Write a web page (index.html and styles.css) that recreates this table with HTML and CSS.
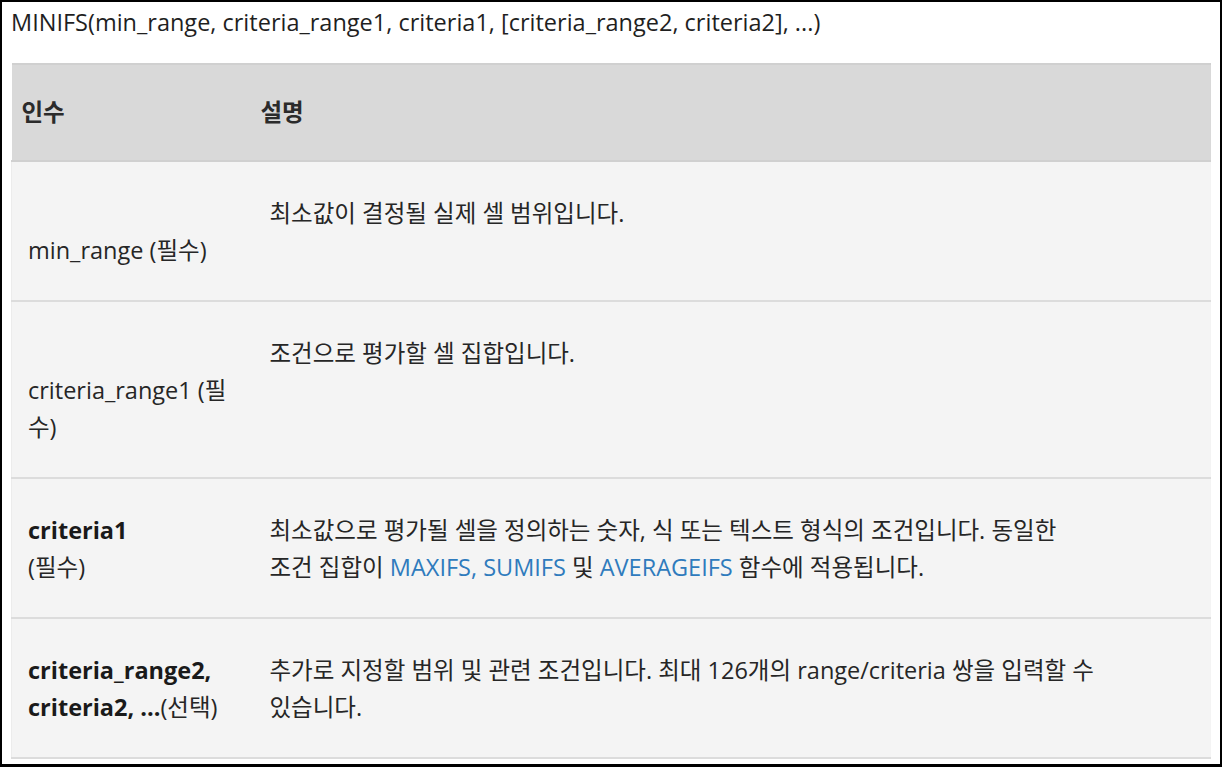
FILE: index.html
```html
<!DOCTYPE html>
<html lang="ko">
<head>
<meta charset="utf-8">
<title>MINIFS</title>
<link rel="stylesheet" href="styles.css">
</head>
<body>
<div class="frame">
  <p class="syntax">MINIFS(min_range, criteria_range1, criteria1, [criteria_range2, criteria2], ...)</p>
  <table class="args">
    <thead>
      <tr>
        <th class="col-arg">인수</th>
        <th class="col-desc">설명</th>
      </tr>
    </thead>
    <tbody>
      <tr>
        <td class="arg"><span class="spacer"></span>min_range (필수)</td>
        <td class="desc">최소값이 결정될 실제 셀 범위입니다.</td>
      </tr>
      <tr>
        <td class="arg"><span class="spacer"></span>criteria_range1 (필수)</td>
        <td class="desc">조건으로 평가할 셀 집합입니다.</td>
      </tr>
      <tr>
        <td class="arg"><b>criteria1</b><br>(필수)</td>
        <td class="desc">최소값으로 평가될 셀을 정의하는 숫자, 식 또는 텍스트 형식의 조건입니다. 동일한 조건 집합이 <a href="#">MAXIFS,</a> <a href="#">SUMIFS</a> 및 <a href="#">AVERAGEIFS</a> 함수에 적용됩니다.</td>
      </tr>
      <tr>
        <td class="arg"><b>criteria_range2, criteria2, ...</b>(선택)</td>
        <td class="desc">추가로 지정할 범위 및 관련 조건입니다. 최대 126개의 range/criteria 쌍을 입력할 수 있습니다.</td>
      </tr>
    </tbody>
  </table>
</div>
</body>
</html>
```

FILE: styles.css
```css
html, body {
  margin: 0;
  padding: 0;
  background: #ffffff;
}

.frame {
  box-sizing: border-box;
  width: 1222px;
  height: 767px;
  border: 2px solid #000;
  border-bottom-width: 3px;
  background: #fff;
  font-family: "Open Sans", "Noto Sans CJK KR", sans-serif;
  font-size: 23.5px;
  line-height: 37px;
  color: #262626;
  overflow: hidden;
}

.syntax {
  margin: 2px 0 22px 9px;
  color: #1f1f1f;
}

.args {
  margin-left: 9px;
  width: 1200px;
  border-collapse: collapse;
  table-layout: fixed;
}

.args th {
  background: #d9d9d9;
  border-top: 2px solid #d0d0d0;
  border-bottom: 2px solid #d0d0d0;
  height: 95px;
  padding: 0;
  text-align: left;
  font-weight: 700;
  color: #2b2b2b;
  vertical-align: middle;
}

.args th.col-arg {
  width: 232px;
  padding-left: 10px;
}

.args th.col-desc {
  padding-left: 7px;
}

.args td {
  background: #f4f4f4;
  border-bottom: 2px solid #dcdcdc;
  vertical-align: top;
  padding: 33px 16px 31px 16px;
}

.args td.arg {
  border-left: 1px solid #ececec;
}

.args td.desc {
  padding-right: 110px;
  word-break: keep-all;
}

.spacer {
  display: block;
  height: 37px;
}

.args b {
  font-weight: 700;
  color: #1a1a1a;
}

.args a {
  color: #2f7bbd;
  text-decoration: none;
}
```
